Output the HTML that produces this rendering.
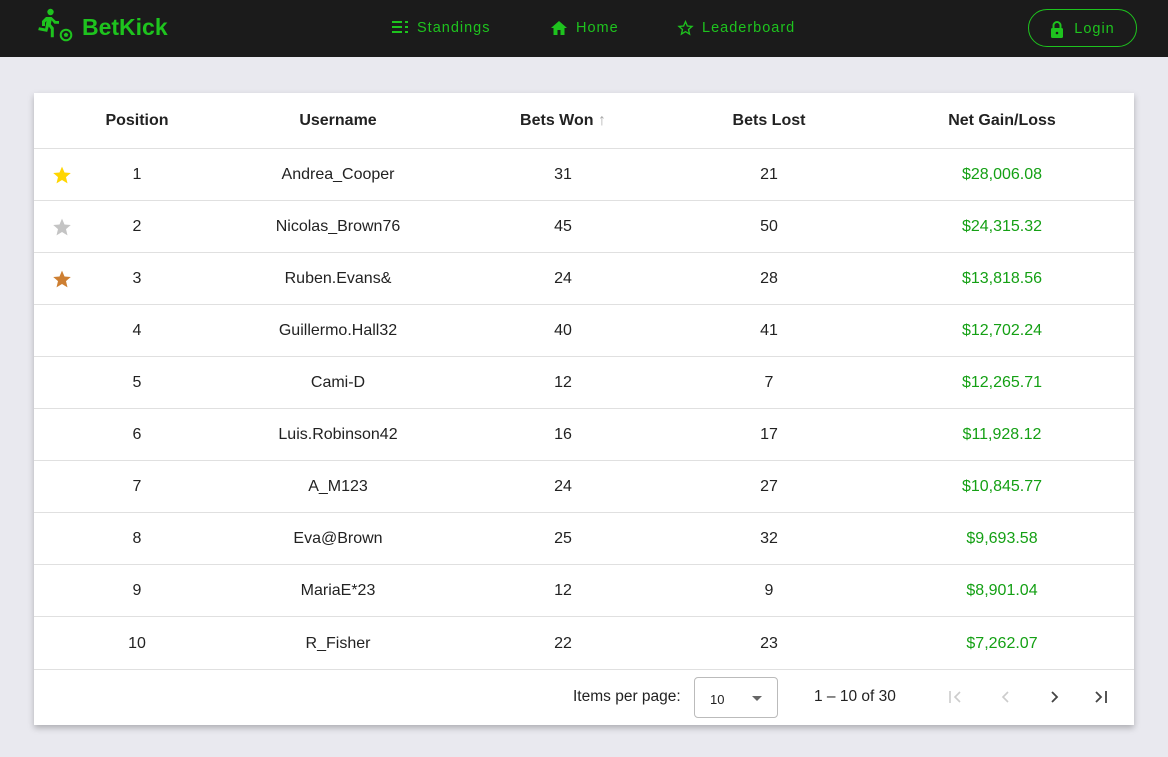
<!DOCTYPE html>
<html><head><style>
*{margin:0;padding:0;box-sizing:border-box}
body{width:1168px;height:757px;background:#e9e9ef;font-family:"Liberation Sans",Roboto,sans-serif;position:relative;overflow:hidden}
.nav{position:absolute;left:0;top:0;width:1168px;height:57px;background:#1b1b1b;color:#1ec31e}
.logo{position:absolute;left:82px;top:14px;font-size:23px;font-weight:bold;color:#1ec31e}
.nl{position:absolute;top:20px;font-size:14.5px;letter-spacing:1px;color:#1ec31e;display:flex;align-items:center;gap:8px}
.login{position:absolute;left:1028px;top:9px;width:109px;height:38px;border:1.5px solid #1ec31e;border-radius:19px;color:#1ec31e;font-size:14.5px;letter-spacing:1px;display:flex;align-items:center;justify-content:center;gap:10px;padding-top:2px}
.card{position:absolute;left:34px;top:93px;width:1100px;height:632px;background:#fff;box-shadow:0 3px 6px rgba(0,0,0,.25)}
.row{position:absolute;left:0;width:1100px;height:52px;border-bottom:1px solid #e0e0e0;font-size:16px;color:#222}
.row div{position:absolute;top:0;line-height:52px;text-align:center;width:200px;margin-left:-100px}
.hd{height:56px;font-weight:bold}
.hd div{line-height:56px}
.g{color:#14a014}
.st{position:absolute;left:18px;top:16px;width:20px;height:20px}
.ft{position:absolute;top:576px;left:0;width:1100px;height:56px;font-size:15.5px;color:#222}
</style></head><body>
<div class="nav">
<svg style="position:absolute;left:35px;top:8px" width="38" height="34" viewBox="0 0 38 34"><circle cx="15.5" cy="4" r="3.2" fill="#1ec31e"/><path d="M11 9l-4 4v5h3v-3.5l1.5-1.5-1.3 7.5-6.2-1.2-.8 2.8 9 1.8 1.6-5.4 2 2.8v8h3v-9.5l-3-3.5.8-4 2.8 3.5h4.6v-2.8h-3.2L16.5 9z" fill="#1ec31e"/><circle cx="31" cy="27" r="5.3" fill="none" stroke="#1ec31e" stroke-width="2"/><path d="M31 24.5l2.3 1.7-.9 2.6h-2.8l-.9-2.6z" fill="#1ec31e"/></svg>
<div class="logo">BetKick</div>
<div class="nl" style="left:391px"><svg width="18" height="16" viewBox="0 0 18 16"><path d="M1 2h10M1 7h10M1 12h10M14 2h3M14 7h3M14 12h3" stroke="#1ec31e" stroke-width="2"/></svg>Standings</div>
<div class="nl" style="left:550px"><svg width="18" height="16" viewBox="0 0 18 16"><path d="M9 1L1 8h2.5v7h4v-5h3v5h4V8H17z" fill="#1ec31e"/></svg>Home</div>
<div class="nl" style="left:677px"><svg width="17" height="16" viewBox="0 0 24 24"><path d="M12 2.5l2.8 6.5 7 .6-5.3 4.6 1.6 6.9L12 17.4l-6.1 3.7 1.6-6.9L2.2 9.6l7-.6z" fill="none" stroke="#1ec31e" stroke-width="2"/></svg>Leaderboard</div>
<div class="login"><svg width="14" height="18" viewBox="0 0 14 18"><path d="M3.5 8V5.5a3.5 3.5 0 0 1 7 0V8" fill="none" stroke="#1ec31e" stroke-width="2"/><rect x="1" y="8" width="12" height="10" rx="1.5" fill="#1ec31e"/><circle cx="7" cy="13" r="1.3" fill="#1b1b1b"/></svg>Login</div>
</div>
<div class="card">
<div class="row hd" style="top:0"><div style="left:103px">Position</div><div style="left:304px">Username</div><div style="left:529px">Bets Won <span style="color:#aaa;font-weight:normal">&#8593;</span></div><div style="left:735px">Bets Lost</div><div style="left:968px">Net Gain/Loss</div></div>
<div class="row" style="top:56px"><svg class="st" viewBox="0 0 24 24"><path d="M12 2l3 7 7.5.6-5.7 5 1.8 7.4L12 18l-6.6 4 1.8-7.4L1.5 9.6 9 9z" fill="#ffd600"/></svg><div style="left:103px">1</div><div style="left:304px">Andrea_Cooper</div><div style="left:529px">31</div><div style="left:735px">21</div><div class="g" style="left:968px">$28,006.08</div></div>
<div class="row" style="top:108px"><svg class="st" viewBox="0 0 24 24"><path d="M12 2l3 7 7.5.6-5.7 5 1.8 7.4L12 18l-6.6 4 1.8-7.4L1.5 9.6 9 9z" fill="#c4c4c4"/></svg><div style="left:103px">2</div><div style="left:304px">Nicolas_Brown76</div><div style="left:529px">45</div><div style="left:735px">50</div><div class="g" style="left:968px">$24,315.32</div></div>
<div class="row" style="top:160px"><svg class="st" viewBox="0 0 24 24"><path d="M12 2l3 7 7.5.6-5.7 5 1.8 7.4L12 18l-6.6 4 1.8-7.4L1.5 9.6 9 9z" fill="#cd7f32"/></svg><div style="left:103px">3</div><div style="left:304px">Ruben.Evans&amp;</div><div style="left:529px">24</div><div style="left:735px">28</div><div class="g" style="left:968px">$13,818.56</div></div>
<div class="row" style="top:212px"><div style="left:103px">4</div><div style="left:304px">Guillermo.Hall32</div><div style="left:529px">40</div><div style="left:735px">41</div><div class="g" style="left:968px">$12,702.24</div></div>
<div class="row" style="top:264px"><div style="left:103px">5</div><div style="left:304px">Cami-D</div><div style="left:529px">12</div><div style="left:735px">7</div><div class="g" style="left:968px">$12,265.71</div></div>
<div class="row" style="top:316px"><div style="left:103px">6</div><div style="left:304px">Luis.Robinson42</div><div style="left:529px">16</div><div style="left:735px">17</div><div class="g" style="left:968px">$11,928.12</div></div>
<div class="row" style="top:368px"><div style="left:103px">7</div><div style="left:304px">A_M123</div><div style="left:529px">24</div><div style="left:735px">27</div><div class="g" style="left:968px">$10,845.77</div></div>
<div class="row" style="top:420px"><div style="left:103px">8</div><div style="left:304px">Eva@Brown</div><div style="left:529px">25</div><div style="left:735px">32</div><div class="g" style="left:968px">$9,693.58</div></div>
<div class="row" style="top:472px"><div style="left:103px">9</div><div style="left:304px">MariaE*23</div><div style="left:529px">12</div><div style="left:735px">9</div><div class="g" style="left:968px">$8,901.04</div></div>
<div class="row" style="top:524px;height:53px"><div style="left:103px;line-height:53px">10</div><div style="left:304px;line-height:53px">R_Fisher</div><div style="left:529px;line-height:53px">22</div><div style="left:735px;line-height:53px">23</div><div class="g" style="left:968px;line-height:53px">$7,262.07</div></div>
<div class="ft">
<span style="position:absolute;left:539px;top:19px">Items per page:</span>
<div style="position:absolute;left:660px;top:8px;width:84px;height:41px;border:1px solid #bbb;border-radius:4px;font-size:13px"><span style="position:absolute;left:15px;top:14px">10</span><span style="position:absolute;left:57px;top:18px;border:5px solid transparent;border-top-color:#666"></span></div>
<span style="position:absolute;left:780px;top:19px">1 – 10 of 30</span>
<svg style="position:absolute;left:913px;top:19px" width="18" height="18" viewBox="0 0 18 18"><path d="M3 3v12M13 4l-5 5 5 5" fill="none" stroke="#ccc" stroke-width="1.6"/></svg>
<svg style="position:absolute;left:963px;top:19px" width="18" height="18" viewBox="0 0 18 18"><path d="M11 4l-5 5 5 5" fill="none" stroke="#ccc" stroke-width="1.6"/></svg>
<svg style="position:absolute;left:1011px;top:19px" width="18" height="18" viewBox="0 0 18 18"><path d="M7 4l5 5-5 5" fill="none" stroke="#444" stroke-width="1.8"/></svg>
<svg style="position:absolute;left:1058px;top:19px" width="18" height="18" viewBox="0 0 18 18"><path d="M4 4l5 5-5 5M14 3v12" fill="none" stroke="#444" stroke-width="1.8"/></svg>
</div>
</div>
</body></html>
